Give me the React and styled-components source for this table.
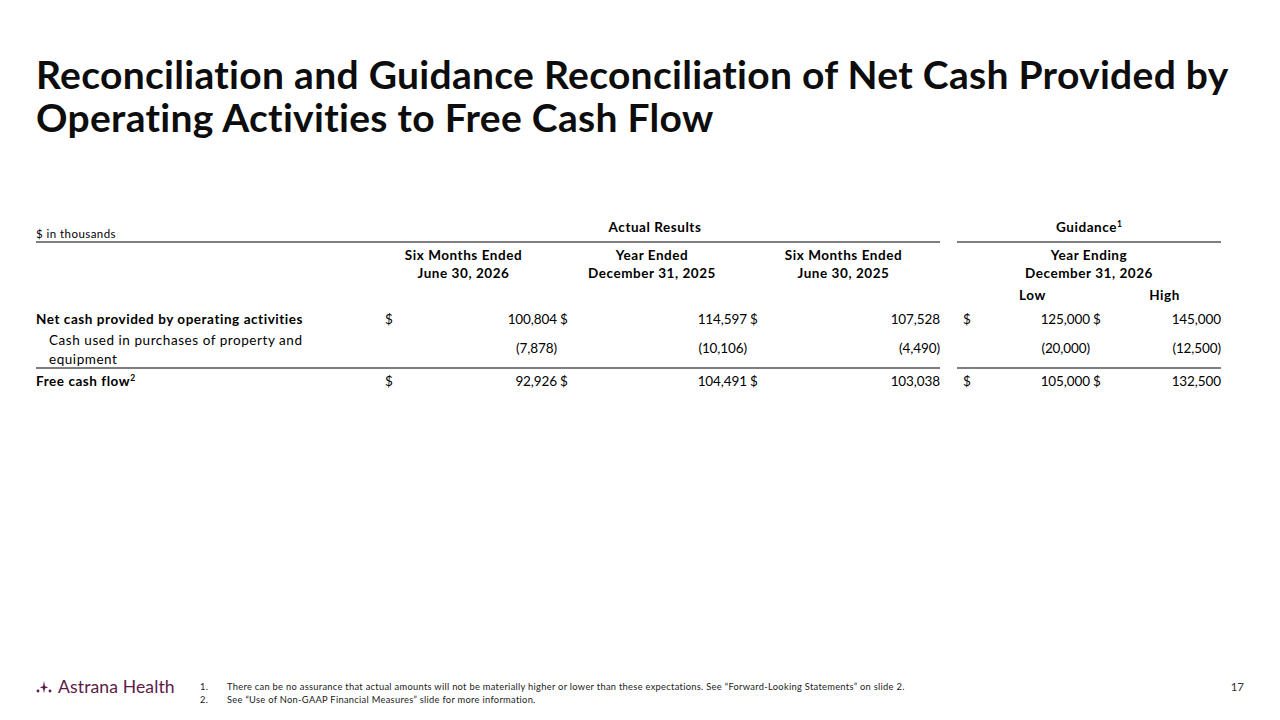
import React from "react";
import styled, { createGlobalStyle } from "styled-components";

const Global = createGlobalStyle`
  html, body { margin: 0; padding: 0; background: #ffffff; }
  body { font-family: "Lato", "Open Sans", sans-serif; color: #000; }
`;

const Slide = styled.div`
  width: 1280px;
  height: 720px;
  box-sizing: border-box;
  display: flex;
  flex-direction: column;
  padding: 53px 0 0 36px;
  overflow: hidden;
`;

const Title = styled.h1`
  margin: 0;
  font-size: 39px;
  line-height: 43px;
  font-weight: 700;
  color: #0d0d0d;
  letter-spacing: 0.3px;
  white-space: nowrap;
`;

const Table = styled.div`
  margin-top: 75px;
  display: grid;
  grid-template-columns: 334px 30px 157px 18px 172px 18px 175px 17px 18px 115px 18px 113px;
  font-size: 13.5px;
  letter-spacing: 0.55px;
  color: #000;
`;

const Cell = styled.div`
  grid-column: ${(p) => p.span || "auto"};
  display: flex;
  align-items: ${(p) => p.align || "center"};
  justify-content: ${(p) => p.justify || "flex-start"};
  text-align: ${(p) => (p.justify === "center" ? "center" : "left")};
  font-weight: ${(p) => (p.bold ? 700 : 400)};
  line-height: 18px;
  white-space: nowrap;
  height: ${(p) => p.h}px;
  box-sizing: border-box;
  padding-top: ${(p) => p.pt || 0}px;
  padding-bottom: ${(p) => p.pb || 0}px;
  padding-left: ${(p) => p.pl || 0}px;
  border-bottom: ${(p) => (p.ruled ? "2px solid #7f7f7f" : "none")};
`;

const Num = styled(Cell)`
  justify-content: flex-end;
  letter-spacing: -0.1px;
`;

const Cur = styled(Cell)`
  letter-spacing: 0;
`;

const Units = styled.span`
  font-size: 11.5px;
  line-height: 13px;
  letter-spacing: 0.45px;
`;

const GroupHead = styled.span`
  font-weight: 700;
  line-height: 16px;
`;

const Sup = styled.sup`
  font-size: 8.5px;
  line-height: 0;
  vertical-align: 5px;
  letter-spacing: 0;
`;

const Label = styled.span`
  white-space: normal;
  line-height: 18.5px;
`;

const Spacer = styled.div`
  flex: 1;
`;

const Footer = styled.div`
  display: flex;
  align-items: flex-start;
  padding: 0 36px 14px 0;
`;

const Logo = styled.div`
  display: flex;
  align-items: center;
  gap: 6px;
  color: #5b1b47;
  font-family: "Lato", sans-serif;
  font-size: 17.6px;
  line-height: 20px;
  letter-spacing: 0.1px;
  width: 164px;
  margin-top: -3px;
`;

const Notes = styled.ol`
  margin: 0;
  padding: 0;
  list-style: none;
  flex: 1;
  font-size: 9.3px;
  letter-spacing: 0.3px;
  line-height: 13px;
  color: #1a1a1a;
`;

const Note = styled.li`
  display: flex;
`;

const NoteNum = styled.span`
  width: 27px;
  flex: none;
`;

const PageNum = styled.div`
  font-size: 11.5px;
  line-height: 13px;
  color: #333;
`;

const LogoMark = () => (
  <svg width="16" height="14" viewBox="0 0 16 14" aria-hidden="true">
    <circle cx="2" cy="11" r="1.4" fill="#5b1b47" />
    <circle cx="14" cy="11" r="1.4" fill="#5b1b47" />
    <path d="M8 1 L9 6.2 L12.2 7.3 L9 8.4 L8 13.2 L7 8.4 L3.8 7.3 L7 6.2 Z" fill="#5b1b47" />
  </svg>
);

const DataRow = ({ h, pt, vals }) => (
  <>
    <Cur h={h} align="flex-start" pt={pt} pl={15}>{vals[0] ? "$" : ""}</Cur>
    <Num h={h} align="flex-start" pt={pt}>{vals[1]}</Num>
    <Cur h={h} align="flex-start" pt={pt} pl={3}>$</Cur>
    <Num h={h} align="flex-start" pt={pt}>{vals[2]}</Num>
    <Cur h={h} align="flex-start" pt={pt} pl={3}>$</Cur>
    <Num h={h} align="flex-start" pt={pt}>{vals[3]}</Num>
    <Cell h={h} />
    <Cur h={h} align="flex-start" pt={pt} pl={6}>$</Cur>
    <Num h={h} align="flex-start" pt={pt}>{vals[4]}</Num>
    <Cur h={h} align="flex-start" pt={pt} pl={3}>$</Cur>
    <Num h={h} align="flex-start" pt={pt}>{vals[5]}</Num>
  </>
);

export default function App() {
  return (
    <>
      <Global />
      <Slide>
        <Title>
          Reconciliation and Guidance Reconciliation of Net Cash Provided by
          <br />
          Operating Activities to Free Cash Flow
        </Title>

        <Table>
          {/* group header row */}
          <Cell h={29} align="flex-end" pb={1} ruled>
            <Units>$ in thousands</Units>
          </Cell>
          <Cell span="span 6" h={29} align="flex-end" justify="center" pb={6} ruled>
            <GroupHead>Actual Results</GroupHead>
          </Cell>
          <Cell h={29} />
          <Cell span="span 4" h={29} align="flex-end" justify="center" pb={6} ruled>
            <GroupHead>
              Guidance<Sup>1</Sup>
            </GroupHead>
          </Cell>

          {/* period header row */}
          <Cell h={38} />
          <Cell span="span 2" h={38} bold justify="center" align="flex-start" pt={3}>
            Six Months Ended
            <br />
            June 30, 2026
          </Cell>
          <Cell span="span 2" h={38} bold justify="center" align="flex-start" pt={3}>
            Year Ended
            <br />
            December 31, 2025
          </Cell>
          <Cell span="span 2" h={38} bold justify="center" align="flex-start" pt={3}>
            Six Months Ended
            <br />
            June 30, 2025
          </Cell>
          <Cell h={38} />
          <Cell span="span 4" h={38} bold justify="center" align="flex-start" pt={3}>
            Year Ending
            <br />
            December 31, 2026
          </Cell>

          {/* low / high */}
          <Cell span="span 9" h={23} />
          <Cell h={23} bold justify="center" align="flex-start" pt={5}>
            Low
          </Cell>
          <Cell h={23} />
          <Cell h={23} bold justify="center" align="flex-start" pt={5}>
            High
          </Cell>

          {/* net cash */}
          <Cell h={25} bold align="flex-start" pt={6}>
            Net cash provided by operating activities
          </Cell>
          <DataRow h={25} pt={6} vals={["$", "100,804", "114,597", "107,528", "125,000", "145,000"]} />

          {/* capex */}
          <Cell h={40} ruled pl={13} align="flex-start" pt={2}>
            <Label>
              Cash used in purchases of property and
              <br />
              equipment
            </Label>
          </Cell>
          <Cell h={40} ruled />
          <Num h={40} ruled>(7,878)</Num>
          <Cell h={40} ruled />
          <Num h={40} ruled>(10,106)</Num>
          <Cell h={40} ruled />
          <Num h={40} ruled>(4,490)</Num>
          <Cell h={40} />
          <Cell h={40} ruled />
          <Num h={40} ruled>(20,000)</Num>
          <Cell h={40} ruled />
          <Num h={40} ruled>(12,500)</Num>

          {/* free cash flow */}
          <Cell h={22} bold align="flex-start" pt={3}>
            <span>
              Free cash flow<Sup>2</Sup>
            </span>
          </Cell>
          <DataRow h={22} pt={3} vals={["$", "92,926", "104,491", "103,038", "105,000", "132,500"]} />
        </Table>

        <Spacer />

        <Footer>
          <Logo>
            <LogoMark />
            <span>Astrana Health</span>
          </Logo>
          <Notes>
            <Note>
              <NoteNum>1.</NoteNum>
              <span>
                There can be no assurance that actual amounts will not be materially higher or lower than these
                expectations. See “Forward-Looking Statements” on slide 2.
              </span>
            </Note>
            <Note>
              <NoteNum>2.</NoteNum>
              <span>See “Use of Non-GAAP Financial Measures” slide for more information.</span>
            </Note>
          </Notes>
          <PageNum>17</PageNum>
        </Footer>
      </Slide>
    </>
  );
}
